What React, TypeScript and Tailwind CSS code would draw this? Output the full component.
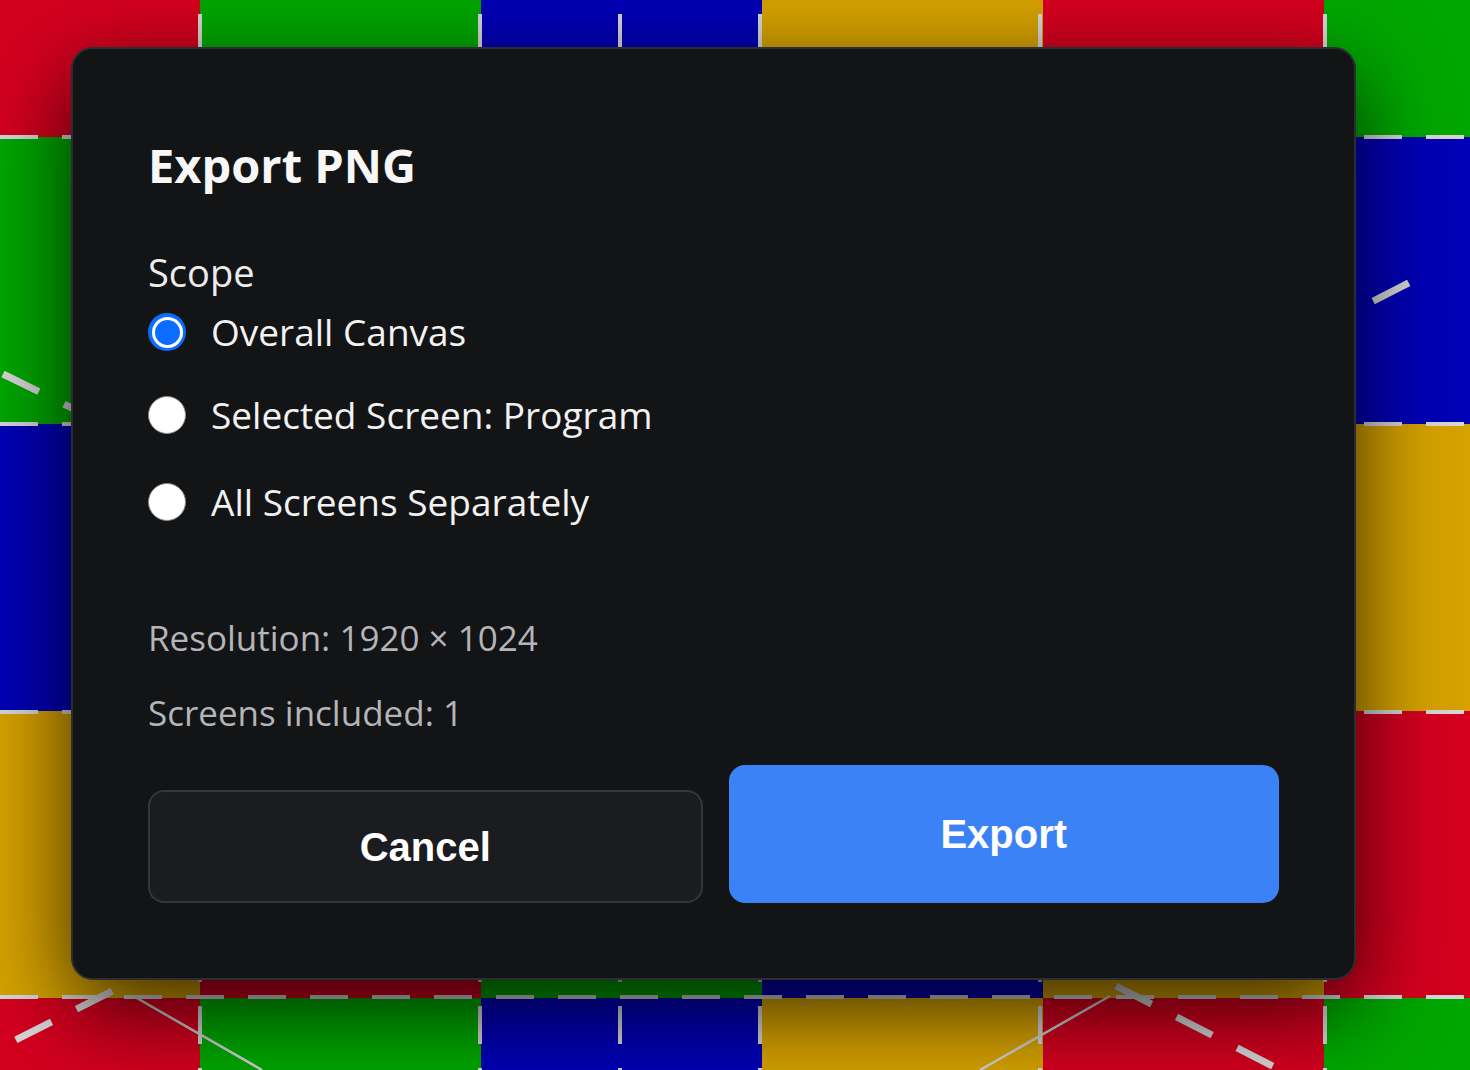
import React, { useState } from 'react';

const cellColors = ['bg-[#d4001e]', 'bg-[#00a700]', 'bg-[#0000b6]', 'bg-[#d6a200]'];

const scopes = [
  { id: 'canvas', label: 'Overall Canvas', gap: 'mt-0' },
  { id: 'selected', label: 'Selected Screen: Program', gap: 'mt-[23px]' },
  { id: 'all', label: 'All Screens Separately', gap: 'mt-[27px]' },
];

const Radio: React.FC<{ checked: boolean }> = ({ checked }) =>
  checked ? (
    <span className="flex h-[38px] w-[38px] shrink-0 items-center justify-center rounded-full bg-[#0b6cff]">
      <span className="flex h-[31px] w-[31px] items-center justify-center rounded-full bg-white">
        <span className="h-[25px] w-[25px] rounded-full bg-[#0b6cff]" />
      </span>
    </span>
  ) : (
    <span className="h-[38px] w-[38px] shrink-0 rounded-full border border-[#8a8a8a] bg-white" />
  );

const CanvasBackdrop: React.FC = () => {
  const rows = [0, 1, 2, 3, 4];
  const cols = [0, 1, 2, 3, 4, 5, 6];
  return (
    <>
      <div className="absolute left-[-81px] top-[-150px] grid grid-cols-[repeat(7,281px)] grid-rows-[repeat(5,287px)]">
        {rows.map((r) =>
          cols.map((c) => <div key={`${r}-${c}`} className={cellColors[(r + c) % 4]} />)
        )}
      </div>
      {/* screen outlines and connectors drawn on the canvas */}
      <svg className="absolute inset-0 h-full w-full" viewBox="0 0 1470 1070" fill="none">
        <g stroke="#d6d6d6" strokeWidth="4" strokeDasharray="38 24">
          {[137, 424, 712, 997].map((y) => (
            <line key={y} x1="0" y1={y} x2="1470" y2={y} />
          ))}
          {[200, 480, 620, 760, 1040, 1325].map((x) => (
            <line key={x} x1={x} y1="0" x2={x} y2="1070" strokeDashoffset="-14" />
          ))}
        </g>
        <g stroke="#d6d6d6" strokeWidth="7" strokeDasharray="40 28">
          <line x1="3" y1="374" x2="80" y2="412" />
          <line x1="1350" y1="313" x2="1430" y2="272" strokeDashoffset="-26" />
          <line x1="130" y1="982" x2="0" y2="1048" strokeDashoffset="-20" />
          <line x1="1116" y1="986" x2="1290" y2="1075" />
        </g>
        <g stroke="#d0d0d0" strokeWidth="2.5">
          <line x1="135" y1="997" x2="262" y2="1070" />
          <line x1="1110" y1="996" x2="980" y2="1070" />
        </g>
      </svg>
    </>
  );
};

const App: React.FC = () => {
  const [scope, setScope] = useState('canvas');

  return (
    <div className="relative h-[1070px] w-full overflow-hidden bg-[#111214] font-['Open_Sans','Noto_Sans',sans-serif]">
      <CanvasBackdrop />

      <div className="absolute left-[71px] top-[47px] w-[1285px] rounded-[22px] border-2 border-[#2b2d31] bg-[#131416] p-[75px] shadow-[0_30px_90px_rgba(0,0,0,0.75)]">
        <h2 className="text-[47px] font-bold leading-[82px] text-[#f7f7f7]">Export PNG</h2>

        <div className="mt-[36px] text-[38px] leading-[60px] text-[#ececec]">Scope</div>

        {scopes.map((s) => (
          <label
            key={s.id}
            onClick={() => setScope(s.id)}
            className={`${s.gap} flex h-[60px] cursor-pointer items-center gap-[25px] text-[37px] text-[#f2f2f2]`}
          >
            <Radio checked={scope === s.id} />
            <span>{s.label}</span>
          </label>
        ))}

        <div className="mt-[76px] text-[35px] leading-[60px] text-[#b3b5b9]">Resolution: 1920 × 1024</div>
        <div className="mt-[15px] text-[35px] leading-[60px] text-[#b3b5b9]">Screens included: 1</div>

        <div className="mt-[22px] flex items-end gap-[26px] font-['Liberation_Sans',Arial,sans-serif]">
          <button className="flex h-[113px] flex-1 items-center justify-center rounded-[16px] border-2 border-[#33363b] bg-[#1a1c20] text-[40px] font-bold text-white">
            Cancel
          </button>
          <button className="flex h-[138px] flex-1 items-center justify-center rounded-[16px] bg-[#3b82f6] text-[40px] font-bold text-white">
            Export
          </button>
        </div>
      </div>
    </div>
  );
};

export default App;
